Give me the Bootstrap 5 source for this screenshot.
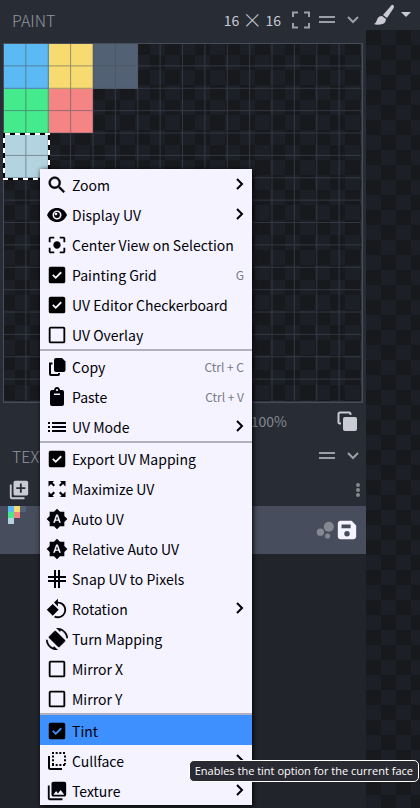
<!DOCTYPE html>
<html lang="en">
<head>
<meta charset="utf-8">
<meta name="viewport" content="width=device-width, initial-scale=1">
<title>Paint</title>
<link href="https://cdn.jsdelivr.net/npm/bootstrap@5.3.0/dist/css/bootstrap.min.css" rel="stylesheet">
<style>
:root{--ui:#282c34;--back:#21252b;--selected:#474d5d;--bright:#f4f3ff;--accent:#3e90ff;--ink:#000006;--txt:#cacad4;--subtle:#848891;
--checker:conic-gradient(#1c2026 25%,#17191d 0 50%,#1c2026 0 75%,#17191d 0)}
body{font-family:"Noto Sans CJK SC","Noto Sans",sans-serif;font-size:14px;line-height:20px;background:var(--back);color:var(--txt);overflow:hidden}
svg{display:block;flex:none}
svg.ic{width:22px;height:22px;fill:currentColor}
.tool{border:0;background:none;padding:0;color:inherit;display:flex}
.tool.subtle{color:var(--subtle)}
.tool.bright{color:var(--bright)}
.panel-bg{background:var(--ui)}
.panel-head{height:40px;padding:0 2px 0 12px}
.panel-head.short{height:34px}
.panel-title{font-size:16px;font-weight:300;line-height:24px;margin:0;color:#9296a0}
.head-tools{gap:4px;color:#9c9fa9}
.res-text{color:var(--txt);padding-right:5px}
.res-text .times{font-size:20px;font-weight:300;line-height:20px;vertical-align:-2px}
.uv-canvas{margin:3px 3px 0;border:1px solid #474d5d;aspect-ratio:1;background:var(--checker) 11px -4px/30px 30px}
.uv-canvas svg{width:100%;height:100%;overflow:visible}
.uv-foot{height:36px;padding:0 8px}
.zoom-level{color:var(--subtle);padding-right:49px}
.tex-tools{height:33px;padding:0 0 0 8px}
.tex-row{height:48px;background:var(--selected);padding:0 8px;color:var(--subtle)}
.view{flex:0 0 54px}
.view-bar{height:30px;padding:0 8px 0 7px;gap:6px}
.view-space{background:var(--checker) 0 0/30px 30px}
.ctx{position:absolute;left:40px;top:169px;width:212px;background:var(--bright);color:var(--ink);box-shadow:1px 1px 5px #000}
.ctx-item{height:30px;width:100%;border:0;background:none;color:inherit;padding:2px 6px 0;text-align:left;display:flex;align-items:center;gap:4px;white-space:nowrap}
.ctx-item.active{background:var(--accent)}
.ctx-line{height:2px;margin:0;border:0;opacity:1;background:#b1b0bc}
.ctx-key{font-family:inherit;font-size:12px;color:#7a7a86;background:none;padding:0;margin:0 2px 0 auto}
.ctx-item .more{width:14px;height:16px;margin:-2px 0 0 auto;fill:none;stroke:currentColor;stroke-width:2}
.tick{appearance:none;width:22px;height:22px;flex:none;background:currentColor;
-webkit-mask:var(--m) center/22px 22px no-repeat;mask:var(--m) center/22px 22px no-repeat;
--m:url("data:image/svg+xml,%3Csvg xmlns='http://www.w3.org/2000/svg' viewBox='0 0 24 24'%3E%3Crect x='4' y='4' width='16' height='16' rx='1' fill='none' stroke='%23000' stroke-width='2'/%3E%3C/svg%3E")}
.tick:checked{--m:url("data:image/svg+xml,%3Csvg xmlns='http://www.w3.org/2000/svg' viewBox='0 0 24 24'%3E%3Cpath fill-rule='evenodd' d='M5 3h14a2 2 0 0 1 2 2v14a2 2 0 0 1-2 2H5a2 2 0 0 1-2-2V5a2 2 0 0 1 2-2zm5.6 13.4L17.3 9.700 15.900 8.300 10.600 13.600 8.100 11.100 6.700 12.500z'/%3E%3C/svg%3E")}
.hint{position:absolute;right:1px;top:760px;font-family:"Open Sans","Noto Sans",sans-serif;font-size:11px;line-height:20px;color:#fff;background:#2a2a32;border:1px solid #fff;border-radius:5px;padding:0 5px;white-space:nowrap}
</style>
</head>
<body>
<div class="d-flex min-vh-100">
  <aside class="flex-grow-1 d-flex flex-column">
    <section class="panel-bg">
      <header class="panel-head d-flex align-items-center justify-content-between">
        <h2 class="panel-title">PAINT</h2>
        <div class="head-tools d-flex align-items-center">
          <span class="res-text text-nowrap">16 <span class="times">×</span> 16</span>
          <button class="tool" aria-label="Fit view"><svg class="ic" viewBox="0 0 22 22"><path fill="none" stroke="currentColor" stroke-width="2" d="M3 8V3.500H8M14 3.500h5V8M19 14v4.500h-5M8 18.500H3V14"/></svg></button>
          <button class="tool" aria-label="Move panel"><svg class="ic" viewBox="0 0 22 22"><path d="M3 7h16v2H3zM3 12h16v2H3z"/></svg></button>
          <button class="tool" aria-label="Fold panel"><svg class="ic" viewBox="0 0 22 22"><path fill="none" stroke="currentColor" stroke-width="2" d="M6 8l5 5 5-5"/></svg></button>
        </div>
      </header>
      <div class="uv-canvas">
        <svg viewBox="0 0 358 358" preserveAspectRatio="none" aria-label="UV map">
          <defs><pattern id="cells" width="22.375" height="22.375" patternUnits="userSpaceOnUse"><path d="M22.375 0V22.375H0" fill="none" stroke="#474d5d" stroke-opacity=".55" stroke-width="2"/></pattern></defs>
          <path fill="#5bbaf4" d="M0 0h45v45H0z"/><path fill="#f7db70" d="M45 0h44v45H45z"/><path fill="#536174" d="M89 0h45v45H89z"/>
          <path fill="#45ea8c" d="M0 45h45v45H0z"/><path fill="#f58585" d="M45 45h44v44H45z"/><path fill="#b2d3df" d="M0 90h45v45H0z"/>
          <path fill="url(#cells)" d="M0 0h358v358H0z"/>
          <path fill="none" stroke="#fff" stroke-width="2" d="M0 90h45v45H0z"/><path fill="none" stroke="#000" stroke-width="2" stroke-dasharray="5 5" stroke-dashoffset="4" d="M0 90h45v45H0z"/>
        </svg>
      </div>
      <footer class="uv-foot d-flex align-items-center justify-content-end">
        <span class="zoom-level">100%</span>
        <button class="tool" aria-label="Overlay mode"><svg class="ic" viewBox="0 0 22 22"><path fill="none" stroke="currentColor" stroke-width="2" d="M5 13.500H4q-1.500 0-1.500-1.500V4q0-1.500 1.500-1.500h9q1.500 0 1.500 1.500v1"/><rect x="7" y="7" width="14" height="14" rx="2"/></svg></button>
      </footer>
    </section>
    <section class="panel-bg">
      <header class="panel-head short d-flex align-items-center justify-content-between">
        <h2 class="panel-title">TEXTURES</h2>
        <div class="head-tools d-flex align-items-center">
          <button class="tool" aria-label="Move textures panel"><svg class="ic" viewBox="0 0 22 22"><path d="M3 7h16v2H3zM3 12h16v2H3z"/></svg></button>
          <button class="tool" aria-label="Fold textures panel"><svg class="ic" viewBox="0 0 22 22"><path fill="none" stroke="currentColor" stroke-width="2" d="M6 8l5 5 5-5"/></svg></button>
        </div>
      </header>
      <div class="tex-tools d-flex align-items-center justify-content-between">
        <button class="tool" aria-label="Add texture"><svg class="ic" viewBox="0 0 24 24"><path d="M4 6H2v14c0 1.100.9 2 2 2h14v-2H4V6zm16-4H8c-1.100 0-2 .9-2 2v12c0 1.100.9 2 2 2h12c1.100 0 2-.9 2-2V4c0-1.100-.9-2-2-2zm-1 9h-4v4h-2v-4H9V9h4V5h2v4h4v2z"/></svg></button>
        <button class="tool subtle" aria-label="More"><svg width="16" height="22" viewBox="0 0 16 22" fill="currentColor"><circle cx="8" cy="6" r="2"/><circle cx="8" cy="11" r="2"/><circle cx="8" cy="16" r="2"/></svg></button>
      </div>
      <div class="tex-row d-flex align-items-center">
        <svg class="align-self-start" width="18" height="18" viewBox="0 0 3 3" shape-rendering="crispEdges"><path fill="#5bbaf4" d="M0 0h1v1H0z"/><path fill="#f7db70" d="M1 0h1v1H1z"/><path fill="#536174" d="M2 0h1v1H2z"/><path fill="#45ea8c" d="M0 1h1v1H0z"/><path fill="#f58585" d="M1 1h1v1H1z"/><path fill="#b2d3df" d="M0 2h1v1H0z"/></svg>
        <svg class="ic ms-auto" viewBox="0 0 24 24"><circle cx="7" cy="14.400" r="4"/><circle cx="14.800" cy="18.500" r="2.800"/><circle cx="16.200" cy="8.500" r="5.500"/></svg>
        <button class="tool bright" aria-label="Save"><svg class="ic" viewBox="0 0 24 24"><path d="M17 2H5c-1.600 0-3 1.300-3 3v14c0 1.600 1.300 3 3 3h14c1.600 0 3-1.300 3-3V7zM12 19a3 3 0 1 1 0-6 3 3 0 0 1 0 6zm4-9H6V6h10z"/></svg></button>
      </div>
    </section>
  </aside>
  <main class="view d-flex flex-column">
    <div class="view-bar panel-bg d-flex align-items-center">
      <button class="tool" aria-label="Brush"><svg class="ic" viewBox="0 0 22 22"><path d="M20 1q2 1 0 4l-6 9-4-3 7-8q2-3 3-2zM9 12l4 3q0 5-6 5.500-4 .5-6-.5 2-1 3-4 1-4 5-4z"/></svg></button>
      <button class="tool" aria-label="Tools"><svg width="10" height="6" viewBox="0 0 10 6" fill="currentColor"><path d="M0 0h10L5 5z"/></svg></button>
    </div>
    <div class="view-space flex-grow-1"></div>
  </main>
</div>

<nav class="ctx" aria-label="UV menu">
  <button class="ctx-item"><svg class="ic" viewBox="0 0 24 24"><path stroke="currentColor" stroke-width=".5" d="M15.500 14h-.79l-.28-.27C15.410 12.590 16 11.110 16 9.500 16 5.910 13.090 3 9.500 3S3 5.910 3 9.500 5.910 16 9.500 16c1.610 0 3.090-.59 4.230-1.570l.27.28v.79l5 4.990L20.490 19l-4.990-5zm-6 0C7.010 14 5 11.990 5 9.500S7.010 5 9.500 5 14 7.010 14 9.500 11.990 14 9.500 14z"/></svg>Zoom<svg class="more" viewBox="0 0 14 16"><path d="M5 3l5 5-5 5"/></svg></button>
  <button class="ctx-item"><svg class="ic" viewBox="0 0 22 22"><path d="M11 4C6.500 4 3 6.500 1 11c2 4.500 5.500 7 10 7s8-2.500 10-7c-2-4.500-5.500-7-10-7z"/><circle cx="11" cy="11" r="3.700" fill="none" stroke="#f4f3ff" stroke-width="1.600"/><circle cx="10" cy="10" r="1.300" fill="#f4f3ff"/></svg>Display UV<svg class="more" viewBox="0 0 14 16"><path d="M5 3l5 5-5 5"/></svg></button>
  <button class="ctx-item"><svg class="ic" viewBox="0 0 24 24"><path d="M12 8c-2.210 0-4 1.790-4 4s1.790 4 4 4 4-1.790 4-4-1.790-4-4-4zm-7 7H3v4c0 1.100.9 2 2 2h4v-2H5v-4zM5 5h4V3H5c-1.100 0-2 .9-2 2v4h2V5zm14-2h-4v2h4v4h2V5c0-1.100-.9-2-2-2zm0 16h-4v2h4c1.100 0 2-.9 2-2v-4h-2v4z"/></svg>Center View on Selection</button>
  <label class="ctx-item"><input class="tick" type="checkbox" checked>Painting Grid<kbd class="ctx-key">G</kbd></label>
  <label class="ctx-item"><input class="tick" type="checkbox" checked>UV Editor Checkerboard</label>
  <label class="ctx-item"><input class="tick" type="checkbox">UV Overlay</label>
  <hr class="ctx-line">
  <button class="ctx-item"><svg class="ic" viewBox="0 0 22 22"><path d="M10 2h6l3.500 3.500V14q0 2-2 2H10q-2 0-2-2V4q0-2 2-2z"/><path d="M3 6.500h3.500v2H5V18h7v-1h2v1q0 2-2 2H5q-2 0-2-2z"/></svg>Copy<kbd class="ctx-key">Ctrl + C</kbd></button>
  <button class="ctx-item"><svg class="ic" viewBox="0 0 22 22"><path fill-rule="evenodd" d="M6 4h2q.5-3 3-3t3 3h2q2 0 2 2v12q0 2-2 2H6q-2 0-2-2V6q0-2 2-2zm5-1a1 1 0 1 0 0 2.200A1 1 0 0 0 11 3zM8 7.500V9h6V7.500z"/></svg>Paste<kbd class="ctx-key">Ctrl + V</kbd></button>
  <button class="ctx-item"><svg class="ic" viewBox="0 0 22 22"><path d="M6 6h14v2H6zM6 10h14v2H6zM6 14h14v2H6zM2 6h2v2H2zM2 10h2v2H2zM2 14h2v2H2z"/></svg>UV Mode<svg class="more" viewBox="0 0 14 16"><path d="M5 3l5 5-5 5"/></svg></button>
  <hr class="ctx-line">
  <label class="ctx-item"><input class="tick" type="checkbox" checked>Export UV Mapping</label>
  <button class="ctx-item"><svg class="ic" viewBox="0 0 22 22"><path d="M2.500 3H8L6.500 4.500l2.500 2.500-1.500 1.500L5 6 2.500 8.500zM19.500 3H14l1.500 1.500L13 7l1.500 1.500L17 6l2.500 2.500zM2.500 19H8l-1.500-1.500L9 15l-1.500-1.500L5 16l-2.500-2.500zM19.500 19H14l1.500-1.500L13 15l1.500-1.500L17 16l2.500-2.500z"/></svg>Maximize UV</button>
  <button class="ctx-item"><svg class="ic" viewBox="0 0 24 24"><path d="M10.850 12.650h2.300L12 9l-1.150 3.650zM20 8.690V4h-4.690L12 .69 8.690 4H4v4.690L.69 12 4 15.310V20h4.690L12 23.310 15.310 20H20v-4.690L23.310 12 20 8.690zM14.300 16l-.7-2h-3.200l-.7 2H7.800L11 7h2l3.200 9h-1.900z"/></svg>Auto UV</button>
  <button class="ctx-item"><svg class="ic" viewBox="0 0 24 24"><path d="M10.850 12.650h2.300L12 9l-1.150 3.650zM20 8.690V4h-4.690L12 .69 8.690 4H4v4.690L.69 12 4 15.310V20h4.690L12 23.310 15.310 20H20v-4.690L23.310 12 20 8.690zM14.300 16l-.7-2h-3.200l-.7 2H7.800L11 7h2l3.200 9h-1.900z"/></svg>Relative Auto UV</button>
  <button class="ctx-item"><svg class="ic" viewBox="0 0 22 22"><path d="M8 2h2v18H8zM12 2h2v18h-2zM2 8h18v2H2zM2 12h18v2H2z"/></svg>Snap UV to Pixels</button>
  <button class="ctx-item"><svg class="ic" viewBox="0 0 24 24"><path d="M7.340 6.410L.86 12.900l6.490 6.480 6.490-6.480zM19.360 6.640C17.610 4.880 15.300 4 13 4V.76L8.760 5 13 9.240V6c1.790 0 3.580.68 4.950 2.050 2.730 2.730 2.730 7.170 0 9.900C16.580 19.320 14.790 20 13 20c-.97 0-1.940-.21-2.840-.61l-1.490 1.490C10.020 21.620 11.510 22 13 22c2.300 0 4.610-.88 6.360-2.640 3.520-3.510 3.520-9.210 0-12.720z"/></svg>Rotation<svg class="more" viewBox="0 0 14 16"><path d="M5 3l5 5-5 5"/></svg></button>
  <button class="ctx-item"><svg class="ic" viewBox="0 0 24 24"><path stroke="currentColor" stroke-width=".5" d="M16.480 2.520c3.270 1.550 5.610 4.720 5.970 8.480h1.500C23.440 4.840 18.290 0 12 0l-.66.03 3.810 3.810 1.330-1.320zM7.520 21.480C4.250 19.940 1.910 16.760 1.550 13H.05C.56 19.160 5.710 24 12 24l.66-.03-3.810-3.810-1.330 1.320zM9.200 3.500 3.500 9.200q-.7.900 0 1.600L13.200 20.500q.9.700 1.600 0l5.700-5.700q.7-.9 0-1.600L10.800 3.500q-.9-.7-1.600 0z"/></svg>Turn Mapping</button>
  <label class="ctx-item"><input class="tick" type="checkbox">Mirror X</label>
  <label class="ctx-item"><input class="tick" type="checkbox">Mirror Y</label>
  <hr class="ctx-line">
  <label class="ctx-item active"><input class="tick" type="checkbox" checked>Tint</label>
  <button class="ctx-item"><svg class="ic" viewBox="0 0 22 22"><path fill="none" stroke="currentColor" stroke-width="2" d="M3 6v11.500q0 1.500 1.500 1.500H16"/><path fill="none" stroke="currentColor" stroke-width="2" stroke-dasharray="2 1.670" d="M6 3h14M6 15h14M7 5.600v9M19 5.600v9"/></svg>Cullface<svg class="more" viewBox="0 0 14 16"><path d="M5 3l5 5-5 5"/></svg></button>
  <button class="ctx-item"><svg class="ic" viewBox="0 0 24 24"><path d="M22 16V4c0-1.100-.9-2-2-2H8c-1.100 0-2 .9-2 2v12c0 1.100.9 2 2 2h12c1.100 0 2-.9 2-2zm-11-4l2.030 2.710L16 11l4 5H8l3-4zM2 6v14c0 1.100.9 2 2 2h14v-2H4V6H2z"/></svg>Texture<svg class="more" viewBox="0 0 14 16"><path d="M5 3l5 5-5 5"/></svg></button>
</nav>
<div class="hint" role="tooltip">Enables the tint option for the current face</div>
<script src="https://cdn.jsdelivr.net/npm/bootstrap@5.3.0/dist/js/bootstrap.bundle.min.js"></script>
</body>
</html>
